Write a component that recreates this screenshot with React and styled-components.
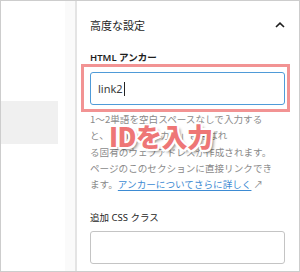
import React from "react";
import styled, { createGlobalStyle } from "styled-components";

const Global = createGlobalStyle`
  html, body {
    margin: 0;
    padding: 0;
    background: #fff;
  }
  body {
    font-family: "Noto Sans", "Noto Sans CJK JP", sans-serif;
  }
`;

const Frame = styled.div`
  display: flex;
  width: 300px;
  height: 272px;
  box-sizing: border-box;
  border: 1px solid #cdcdcd;
  overflow: hidden;
  background: #fff;
`;

const Canvas = styled.div`
  width: 64px;
  flex-shrink: 0;
  padding-top: 100px;
`;

const CanvasBlock = styled.div`
  width: 57px;
  height: 43px;
  background: #f0f0f0;
`;

const Gutter = styled.div`
  width: 10px;
  flex-shrink: 0;
  background: #fafafa;
  border-right: 2px solid #e4e4e4;
`;

const Panel = styled.div`
  flex: 1;
  padding: 14px 14px 0 13px;
  position: relative;
`;

const PanelHeader = styled.div`
  display: flex;
  align-items: center;
  justify-content: space-between;
  height: 20px;
`;

const PanelTitle = styled.h2`
  margin: 0;
  font-family: "Noto Sans CJK JP", sans-serif;
  font-size: 11px;
  font-weight: 400;
  color: #1e1e1e;
`;

const Label = styled.div`
  margin-top: ${p => p.$top || 0}px;
  font-family: "Noto Sans", "Noto Sans CJK JP", sans-serif;
  font-size: 9.5px;
  font-weight: ${p => (p.$bold ? 600 : 400)};
  color: #1e1e1e;
  line-height: 12px;
`;

const FieldWrap = styled.div`
  position: relative;
  margin-top: ${p => p.$top || 0}px;
`;

const Highlight = styled.div`
  position: absolute;
  top: -8px;
  left: -9px;
  right: -5px;
  bottom: -7px;
  border: 3px solid #f29393;
  pointer-events: none;
`;

const Input = styled.div`
  height: 33px;
  box-sizing: border-box;
  border: ${p => (p.$focused ? "1.5px solid #4f9bd8" : "1px solid #c4c4c4")};
  border-radius: 3px;
  display: flex;
  align-items: center;
  padding-left: 7px;
  font-family: "Noto Sans", sans-serif;
  font-size: 11px;
  color: #3c3c3c;
`;

const Caret = styled.span`
  display: inline-block;
  width: 1px;
  height: 14px;
  background: #222;
  margin-left: 1px;
`;

const Help = styled.div`
  position: relative;
  margin-top: 6px;
  font-family: "Noto Sans CJK JP", sans-serif;
  font-size: 9.6px;
  line-height: 16.3px;
  color: #8a8a8a;
  white-space: nowrap;
`;

const HelpLink = styled.a`
  color: #3d8bd3;
  text-decoration: underline;
  text-underline-offset: 2px;
`;

const Callout = styled.div`
  position: absolute;
  left: 19px;
  top: 10px;
  font-family: "Noto Sans CJK JP", sans-serif;
  font-size: 26px;
  font-weight: 900;
  line-height: 30px;
  color: #ee7676;
  letter-spacing: -0.5px;
  text-shadow:
    2px 0 0 #fff, -2px 0 0 #fff, 0 2px 0 #fff, 0 -2px 0 #fff,
    1.5px 1.5px 0 #fff, -1.5px -1.5px 0 #fff, 1.5px -1.5px 0 #fff, -1.5px 1.5px 0 #fff,
    3px 3px 3px rgba(0, 0, 0, 0.45);
`;

const Chevron = () => (
  <svg width="10" height="6" viewBox="0 0 10 6">
    <path d="M1 5 L5 1.2 L9 5" fill="none" stroke="#1e1e1e" strokeWidth="1.6" />
  </svg>
);

export default function App() {
  return (
    <>
      <Global />
      <Frame>
        <Canvas>
          <CanvasBlock />
        </Canvas>
        <Gutter />
        <Panel>
          <PanelHeader>
            <PanelTitle>高度な設定</PanelTitle>
            <Chevron />
          </PanelHeader>
          <Label $top={17} $bold>
            HTML アンカー
          </Label>
          <FieldWrap $top={8}>
            <Input $focused>
              link2
              <Caret />
            </Input>
            <Highlight />
          </FieldWrap>
          <Help>
            1〜2単語を空白スペースなしで入力する
            <br />
            と、「HTML アンカー」と呼ばれ
            <br />
            る固有のウェブアドレスが作成されます。
            <br />
            ページのこのセクションに直接リンクでき
            <br />
            ます。<HelpLink>アンカーについてさらに詳しく</HelpLink> ↗
            <Callout>IDを入力</Callout>
          </Help>
          <Label $top={20}>追加 CSS クラス</Label>
          <FieldWrap $top={7}>
            <Input />
          </FieldWrap>
        </Panel>
      </Frame>
    </>
  );
}
